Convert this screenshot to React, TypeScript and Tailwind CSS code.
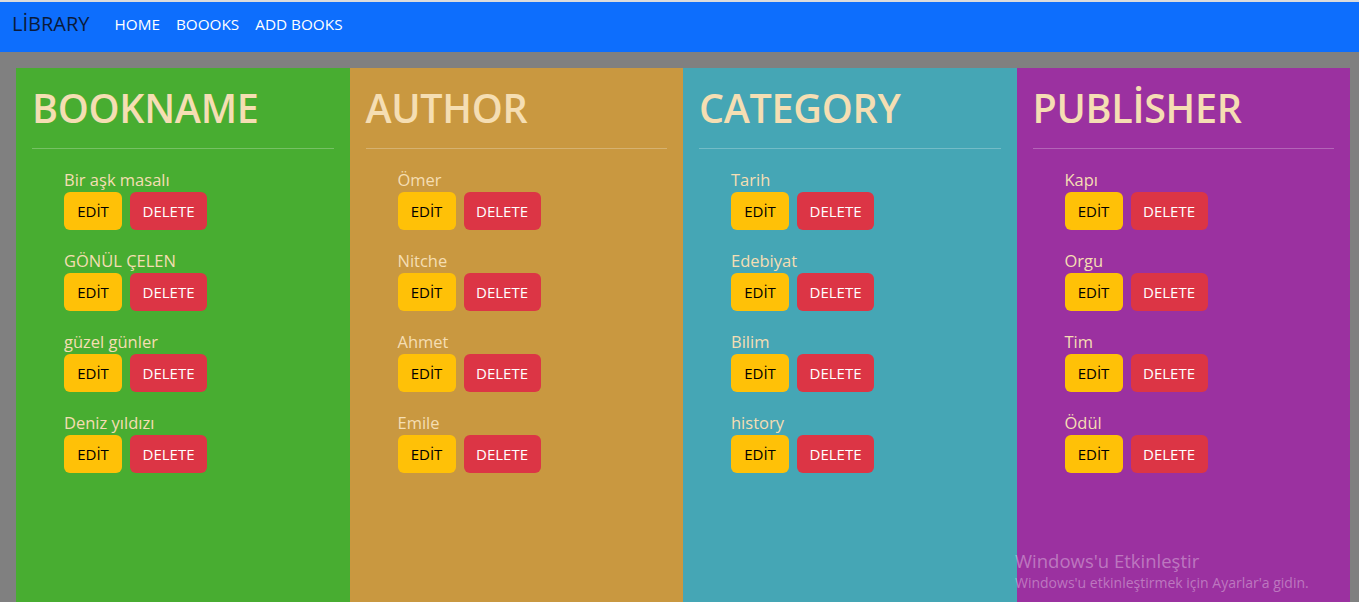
import React from "react";

const columns = [
  { title: "BOOKNAME", bg: "bg-[#48ad31]", items: ["Bir aşk masalı", "GÖNÜL ÇELEN", "güzel günler", "Deniz yıldızı"] },
  { title: "AUTHOR", bg: "bg-[#c99840]", items: ["Ömer", "Nitche", "Ahmet", "Emile"] },
  { title: "CATEGORY", bg: "bg-[#45a6b5]", items: ["Tarih", "Edebiyat", "Bilim", "history"] },
  { title: "PUBLİSHER", bg: "bg-[#9b31a0]", items: ["Kapı", "Orgu", "Tim", "Ödül"] },
];

export default function App() {
  return (
    <div
      className="relative min-h-[602px] bg-[#808080] overflow-hidden"
      style={{ fontFamily: '"Open Sans", "Noto Sans", sans-serif' }}
    >
      <div className="h-[2px] bg-[#dcdcdc]" />
      <nav className="h-[50px] bg-[#0d6efd] flex items-start pt-[11px] px-[12px]">
        <span className="text-[20px] text-[#0b1a3a] mr-[25px] leading-[22px]">LİBRARY</span>
        <div className="flex gap-[16px] text-white text-[15.3px] leading-[22px]">
          <span>HOME</span>
          <span>BOOOKS</span>
          <span>ADD BOOKS</span>
        </div>
      </nav>
      <div className="flex pl-[16px] pr-[9px] pt-[16px]">
        {columns.map((c) => (
          <div key={c.title} className={`flex-1 ${c.bg} min-h-[560px] px-[16px] pt-[16px]`}>
            <h1 className="text-[39.5px] font-semibold text-[#f5deb3] leading-[48px] tracking-[-0.3px]">{c.title}</h1>
            <hr className="mt-[16px] mb-[16px] border-t border-white/25" />
            <ul className="pl-[32px] pt-[2px]">
              {c.items.map((it) => (
                <li key={it} className="mb-[18px]">
                  <div className="text-[16.5px] leading-[25px] text-[#f5deb3]">{it}</div>
                  <div className="flex gap-[8px]">
                    <button className="h-[38px] w-[58px] rounded-[6px] bg-[#ffc107] text-black text-[15px]">EDİT</button>
                    <button className="h-[38px] w-[77px] rounded-[6px] bg-[#dc3545] text-white text-[15px]">DELETE</button>
                  </div>
                </li>
              ))}
            </ul>
          </div>
        ))}
      </div>
      <div className="absolute left-[1015px] top-[549px] text-white/35 leading-tight">
        <div className="text-[18.5px]">Windows'u Etkinleştir</div>
        <div className="text-[14px] mt-[2px]">Windows'u etkinleştirmek için Ayarlar'a gidin.</div>
      </div>
    </div>
  );
}
